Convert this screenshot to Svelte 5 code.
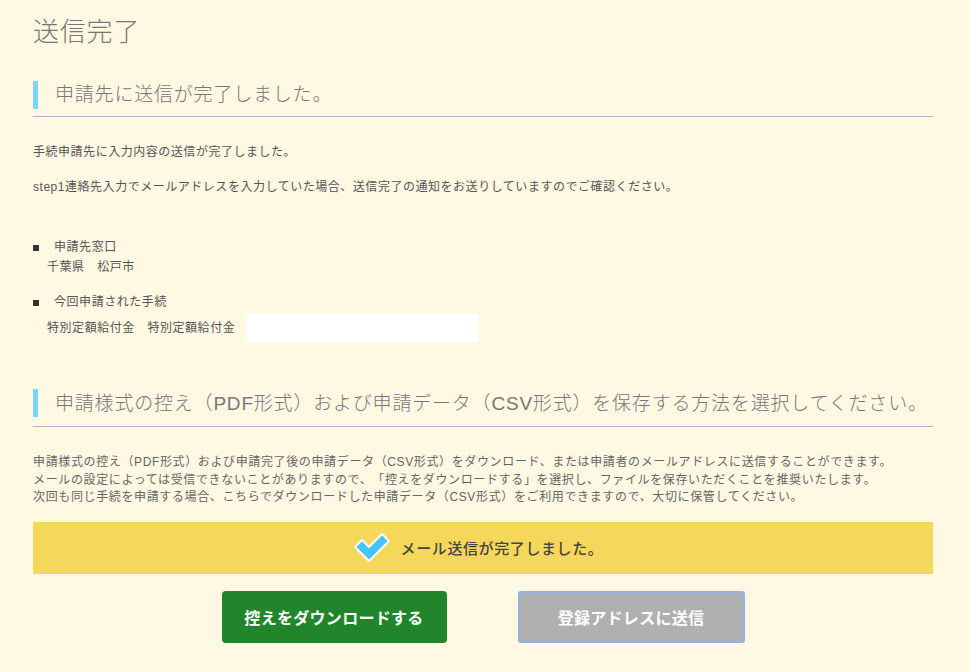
<script>
	const intro = [
		'手続申請先に入力内容の送信が完了しました。',
		'step1連絡先入力でメールアドレスを入力していた場合、送信完了の通知をお送りしていますのでご確認ください。'
	];
	const notes = [
		'申請様式の控え（PDF形式）および申請完了後の申請データ（CSV形式）をダウンロード、または申請者のメールアドレスに送信することができます。',
		'メールの設定によっては受信できないことがありますので、「控えをダウンロードする」を選択し、ファイルを保存いただくことを推奨いたします。',
		'次回も同じ手続を申請する場合、こちらでダウンロードした申請データ（CSV形式）をご利用できますので、大切に保管してください。'
	];
</script>

<main class="page">
	<h1>送信完了</h1>

	<h2>申請先に送信が完了しました。</h2>
	<div class="intro">
		{#each intro as line}
			<p>{line}</p>
		{/each}
	</div>

	<dl class="info">
		<dt>申請先窓口</dt>
		<dd>千葉県　松戸市</dd>
		<dt class="second">今回申請された手続</dt>
		<dd class="procedure">
			<span>特別定額給付金　特別定額給付金</span>
			<span class="masked"></span>
		</dd>
	</dl>

	<h2 class="save">申請様式の控え（PDF形式）および申請データ（CSV形式）を保存する方法を選択してください。</h2>
	<div class="notes">
		{#each notes as line}
			<p>{line}</p>
		{/each}
	</div>

	<div class="banner">
		<svg width="38" height="31" viewBox="0 0 38 31" aria-hidden="true">
			<path d="M2 15 L9 8 L16 15 L29 2 L36 9 L16 29 Z" fill="#44c4fb" stroke="#fff" stroke-width="2" stroke-linejoin="round" />
		</svg>
		<span>メール送信が完了しました。</span>
	</div>

	<div class="actions">
		<button class="download">控えをダウンロードする</button>
		<button class="send">登録アドレスに送信</button>
	</div>
</main>

<style>
	:global(body) {
		background: #fff8e3;
		font-family: "Liberation Sans", "Noto Sans CJK JP", sans-serif;
		color: #555;
		text-spacing-trim: space-all;
	}

	.page {
		padding: 16px 36px 0 33px;
	}

	h1 {
		margin: 0;
		font-size: 26px;
		line-height: 32px;
		font-weight: 300;
		letter-spacing: 0.8px;
		color: #777;
	}

	h2 {
		margin: 33px 0 0;
		height: 35px;
		padding-left: 22px;
		font-size: 19px;
		line-height: 28px;
		font-weight: 300;
		letter-spacing: 0.8px;
		color: #777;
		position: relative;
		border-bottom: 1px solid #a9b8bd;
	}

	h2::before {
		content: "";
		position: absolute;
		left: 0;
		top: 0;
		width: 5px;
		height: 28px;
		background: #7bd4fb;
	}

	h2.save {
		margin-top: 47px;
		height: 37px;
		line-height: 29px;
	}

	p {
		margin: 0;
	}

	.intro {
		margin-top: 26px;
		display: grid;
		gap: 17px;
		font-size: 12px;
		line-height: 18px;
		letter-spacing: 0.53px;
	}

	.info {
		margin: 42px 0 0;
		font-size: 12px;
		line-height: 18px;
		letter-spacing: 0.55px;
	}

	dt {
		padding-left: 21px;
		position: relative;
	}

	dt::before {
		content: "";
		position: absolute;
		left: 0;
		top: 7px;
		width: 6px;
		height: 6px;
		background: #333;
	}

	dt.second {
		margin-top: 17px;
	}

	dd {
		margin: 2px 0 0 14px;
	}

	.procedure {
		display: flex;
		align-items: center;
		gap: 10px;
		margin-top: 3px;
	}

	.masked {
		width: 233px;
		height: 28px;
		background: #fff;
	}

	.notes {
		margin-top: 27px;
		font-size: 12px;
		line-height: 17.5px;
		letter-spacing: 0.63px;
		color: #666;
	}

	.banner {
		margin-top: 15px;
		height: 52px;
		padding-right: 10px;
		background: #f5d75b;
		display: flex;
		align-items: center;
		justify-content: center;
		gap: 10px;
		font-size: 15px;
		font-weight: 500;
		letter-spacing: 0.6px;
		color: #444;
	}

	.actions {
		margin-top: 17px;
		display: flex;
		justify-content: center;
		gap: 71px;
	}

	button {
		width: 225px;
		height: 52px;
		border-radius: 4px;
		font: inherit;
		font-size: 16px;
		font-weight: 700;
		letter-spacing: 0.3px;
		color: #fff;
	}

	.download {
		background: #20852b;
		border: none;
	}

	.send {
		background: #b0b0b0;
		border: 2px solid #8fb3e8;
		border-radius: 3px;
		width: 227px;
	}
</style>
